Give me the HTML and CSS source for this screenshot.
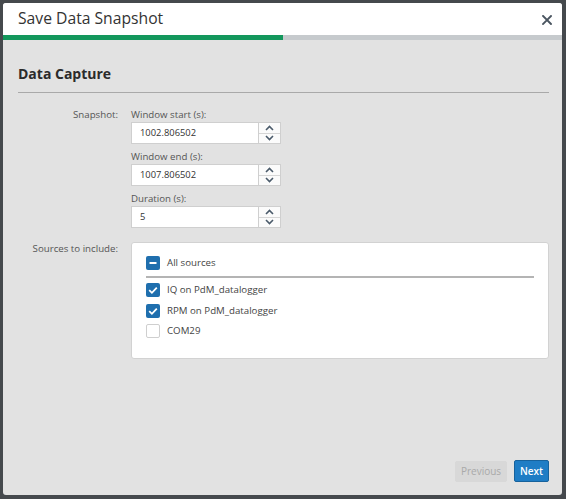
FILE: index.html
```html
<!DOCTYPE html>
<html>
<head>
<meta charset="utf-8">
<link rel="stylesheet" href="styles.css">
</head>
<body>
<div class="dialog">
  <header class="dlg-header">
    <h1 class="dlg-title">Save Data Snapshot</h1>
    <button class="close" aria-label="Close">
      <svg width="10" height="10" viewBox="0 0 10 10"><path d="M1 1 L9 9 M9 1 L1 9" stroke="#4a5560" stroke-width="1.9" stroke-linecap="square"/></svg>
    </button>
  </header>
  <div class="progress"><div class="progress-fill" style="width:50.1%"></div></div>
  <main class="dlg-body">
    <h2 class="section-title">Data Capture</h2>
    <div class="form-row snapshot-row">
      <div class="row-label">Snapshot:</div>
      <div class="fields">
        <div class="field">
          <div class="field-label">Window start (s):</div>
          <div class="num-input">
            <div class="num-value">1002.806502</div>
            <div class="spinner">
              <span class="spin up"><svg width="9" height="6" viewBox="0 0 9 6"><path d="M1 5 L4.5 1.5 L8 5" fill="none" stroke="#4a5a6a" stroke-width="1.6"/></svg></span>
              <span class="spin down"><svg width="9" height="6" viewBox="0 0 9 6"><path d="M1 1 L4.5 4.5 L8 1" fill="none" stroke="#4a5a6a" stroke-width="1.6"/></svg></span>
            </div>
          </div>
        </div>
        <div class="field">
          <div class="field-label">Window end (s):</div>
          <div class="num-input">
            <div class="num-value">1007.806502</div>
            <div class="spinner">
              <span class="spin up"><svg width="9" height="6" viewBox="0 0 9 6"><path d="M1 5 L4.5 1.5 L8 5" fill="none" stroke="#4a5a6a" stroke-width="1.6"/></svg></span>
              <span class="spin down"><svg width="9" height="6" viewBox="0 0 9 6"><path d="M1 1 L4.5 4.5 L8 1" fill="none" stroke="#4a5a6a" stroke-width="1.6"/></svg></span>
            </div>
          </div>
        </div>
        <div class="field">
          <div class="field-label">Duration (s):</div>
          <div class="num-input">
            <div class="num-value">5</div>
            <div class="spinner">
              <span class="spin up"><svg width="9" height="6" viewBox="0 0 9 6"><path d="M1 5 L4.5 1.5 L8 5" fill="none" stroke="#4a5a6a" stroke-width="1.6"/></svg></span>
              <span class="spin down"><svg width="9" height="6" viewBox="0 0 9 6"><path d="M1 1 L4.5 4.5 L8 1" fill="none" stroke="#4a5a6a" stroke-width="1.6"/></svg></span>
            </div>
          </div>
        </div>
      </div>
    </div>
    <div class="form-row sources-row">
      <div class="row-label">Sources to include:</div>
      <div class="sources">
        <div class="check-row all-row">
          <span class="cb checked"><svg width="14" height="14" viewBox="0 0 14 14"><path d="M3.5 7 H10.5" stroke="#fff" stroke-width="1.8"/></svg></span>
          <span class="cb-label">All sources</span>
        </div>
        <div class="sep"></div>
        <div class="check-row">
          <span class="cb checked"><svg width="14" height="14" viewBox="0 0 14 14"><path d="M3.2 7.2 L5.9 9.8 L10.8 4.6" fill="none" stroke="#fff" stroke-width="1.8"/></svg></span>
          <span class="cb-label">IQ on PdM_datalogger</span>
        </div>
        <div class="check-row">
          <span class="cb checked"><svg width="14" height="14" viewBox="0 0 14 14"><path d="M3.2 7.2 L5.9 9.8 L10.8 4.6" fill="none" stroke="#fff" stroke-width="1.8"/></svg></span>
          <span class="cb-label">RPM on PdM_datalogger</span>
        </div>
        <div class="check-row">
          <span class="cb"></span>
          <span class="cb-label">COM29</span>
        </div>
      </div>
    </div>
  </main>
  <footer class="dlg-footer">
    <button class="btn btn-prev" disabled>Previous</button>
    <button class="btn btn-next">Next</button>
  </footer>
</div>
</body>
</html>
```
FILE: styles.css
```css
* { box-sizing: border-box; }
html, body { margin: 0; height: 100%; }
body {
  background: #45494d;
  padding: 3px 4px 4px 3px;
  font-family: "Open Sans", "Noto Sans", sans-serif;
  color: #444;
}
.dialog {
  width: 559px;
  height: 492px;
  background: #e2e2e2;
  border-radius: 3px;
  overflow: hidden;
  display: flex;
  flex-direction: column;
}
.dlg-header {
  height: 32px;
  background: #fff;
  display: flex;
  align-items: center;
  justify-content: space-between;
  padding: 0 10px 0 15px;
}
.dlg-title {
  margin: 0;
  font-size: 15.7px;
  font-weight: 400;
  color: #333;
  line-height: 1;
}
.close {
  border: 0;
  background: none;
  padding: 0;
  width: 10px;
  height: 10px;
  display: flex;
  margin-top: 1px;
}
.progress {
  height: 5px;
  background: #c6cacd;
}
.progress-fill {
  height: 100%;
  background: #13975c;
}
.dlg-body {
  flex: 1;
  padding: 24px 13px 0 15px;
}
.section-title {
  margin: 0;
  font-size: 14px;
  font-weight: 700;
  color: #2b2b2b;
  line-height: 20px;
  padding-bottom: 8px;
  border-bottom: 1px solid #a9a9a9;
}
.form-row {
  display: grid;
  grid-template-columns: 100px 1fr;
  column-gap: 13px;
  font-size: 9.7px;
  line-height: 14px;
}
.snapshot-row { margin-top: 15px; }
.sources-row { margin-top: 14px; }
.row-label {
  text-align: right;
  color: #555;
}
.fields {
  display: flex;
  flex-direction: column;
  gap: 6px;
}
.field-label { color: #555; }
.num-input {
  display: flex;
  width: 150px;
  height: 22px;
}
.num-value {
  flex: 1;
  background: #fff;
  border: 1px solid #cfcfcf;
  border-right: 0;
  padding: 0 8px;
  font-size: 9.4px;
  line-height: 20px;
  color: #333;
}
.spinner {
  width: 23px;
  border: 1px solid #cfcfcf;
  background: #fbfbfb;
  display: flex;
  flex-direction: column;
}
.spin {
  flex: 1;
  display: flex;
  align-items: center;
  justify-content: center;
}
.spin.up { border-bottom: 1px solid #d6d6d6; }
.sources {
  background: #fff;
  border: 1px solid #d2d2d2;
  border-radius: 3px;
  padding: 13px 14px 20px 14px;
}
.check-row {
  display: flex;
  align-items: center;
  gap: 7px;
  height: 14px;
  margin-bottom: 6.5px;
  color: #444;
}
.check-row:last-child { margin-bottom: 0; }
.all-row { margin-bottom: 6px; }
.sep {
  height: 2px;
  background: #b4b4b4;
  margin-bottom: 5px;
}
.cb {
  width: 14px;
  height: 14px;
  border-radius: 2px;
  border: 1px solid #cfcfcf;
  background: #fff;
  flex: none;
  display: flex;
}
.cb.checked {
  border: 0;
  background: #1f6fae;
}
.dlg-footer {
  display: flex;
  justify-content: flex-end;
  align-items: center;
  gap: 7px;
  padding: 0 13px 13px 0;
}
.btn {
  font-family: inherit;
  font-size: 10px;
  border-radius: 2px;
  padding: 0;
  cursor: pointer;
}
.btn-prev {
  width: 52px;
  height: 21px;
  background: #d8d8d8;
  border: 1px solid #d8d8d8;
  color: #a9a9a9;
}
.btn-next {
  width: 35px;
  height: 22px;
  background: #1f7dc5;
  border: 1px solid #17629c;
  color: #fff;
  font-weight: 600;
}
```
